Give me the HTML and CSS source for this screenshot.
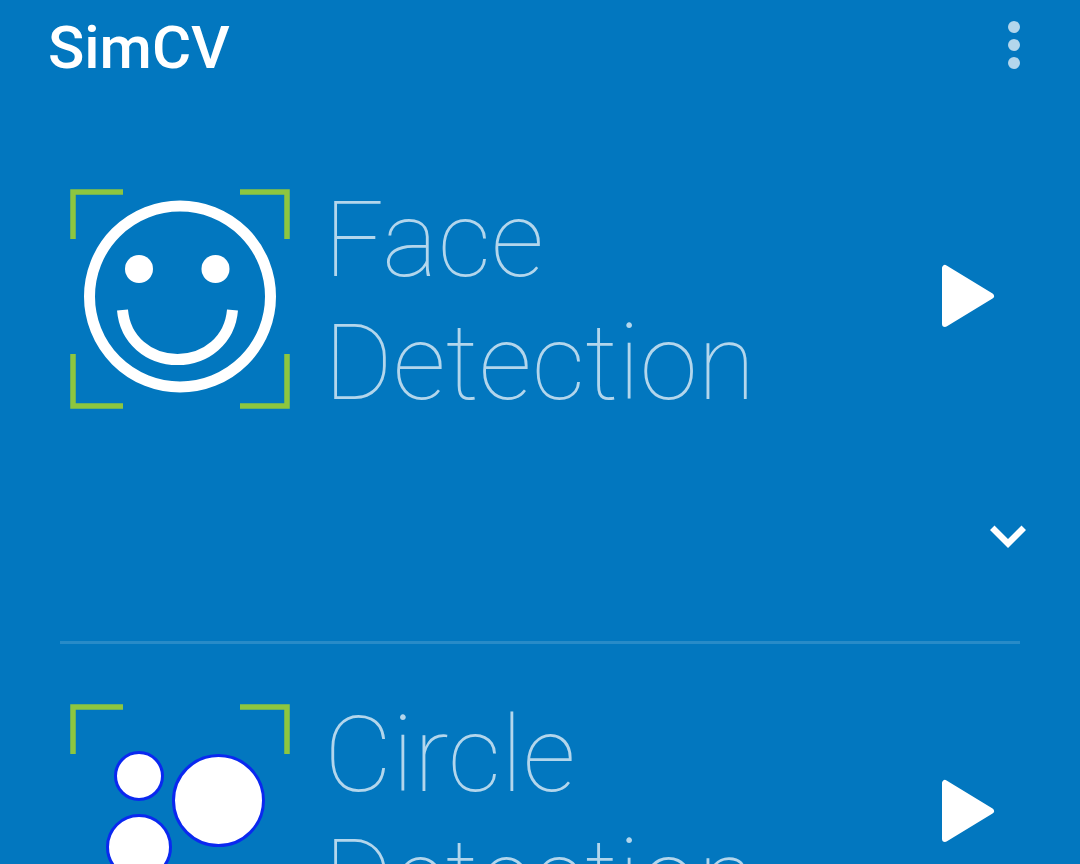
FILE: index.html
```html
<!DOCTYPE html>
<html lang="en">
<head>
<meta charset="utf-8">
<meta name="viewport" content="width=device-width, initial-scale=1">
<title>SimCV</title>
<link rel="stylesheet" href="styles.css">
</head>
<body>
<header class="app-bar">
  <h1 class="app-title">SimCV</h1>
  <button class="icon-button menu-button" type="button" aria-label="More options">
    <svg width="12" height="48" viewBox="0 0 12 48" fill="currentColor"><circle cx="6" cy="6" r="6"/><circle cx="6" cy="24" r="6"/><circle cx="6" cy="42" r="6"/></svg>
  </button>
</header>
<main class="list">
  <article class="item">
    <div class="item-row">
      <svg class="item-icon" viewBox="0 0 240 240" aria-hidden="true">
        <path class="frame" d="M13 60V13H63M180 13H227V60M13 175V227H63M180 227H227V175"/>
        <circle class="line" cx="120" cy="117.500" r="90.500"/>
        <circle class="solid" cx="79" cy="90" r="14"/>
        <circle class="solid" cx="155.500" cy="90" r="14"/>
        <path class="line" d="M62.500 131C65 161 89 180.500 117.500 180.500S170 161 172.500 131"/>
      </svg>
      <h2 class="item-title">Face Detection</h2>
      <button class="icon-button play-button" type="button" aria-label="Start face detection">
        <svg width="54" height="64" viewBox="0 0 54 64" fill="currentColor" stroke="currentColor" stroke-width="6" stroke-linejoin="round"><path d="M4 4V60L50 32Z"/></svg>
      </button>
    </div>
    <div class="item-actions">
      <button class="icon-button expand-button" type="button" aria-label="Show details">
        <svg width="36" height="24" viewBox="0 0 36 24" fill="currentColor"><path d="M4.500 .5L18 14L31.500 .5L36 5L18 23L0 5Z"/></svg>
      </button>
    </div>
  </article>
  <article class="item">
    <div class="item-row">
      <svg class="item-icon" viewBox="0 0 240 240" aria-hidden="true">
        <path class="frame" d="M13 60V13H63M180 13H227V60M13 175V227H63M180 227H227V175"/>
        <circle class="dot" cx="79" cy="82" r="23.500"/>
        <circle class="dot" cx="158.500" cy="106.500" r="45"/>
        <circle class="dot" cx="79" cy="153" r="31.500"/>
      </svg>
      <h2 class="item-title">Circle Detection</h2>
      <button class="icon-button play-button" type="button" aria-label="Start circle detection">
        <svg width="54" height="64" viewBox="0 0 54 64" fill="currentColor" stroke="currentColor" stroke-width="6" stroke-linejoin="round"><path d="M4 4V60L50 32Z"/></svg>
      </button>
    </div>
  </article>
</main>
</body>
</html>
```
FILE: styles.css
```css
* {
  box-sizing: border-box;
}

body {
  margin: 0;
  height: 100vh;
  display: flex;
  flex-direction: column;
  overflow: hidden;
  background: #0277bf;
  color: #fff;
  font-family: Roboto, "Noto Sans", sans-serif;
}

.app-bar {
  display: flex;
  flex: none;
  align-items: center;
  justify-content: space-between;
  padding: 13px 60px 37px 48px;
}

.app-title {
  margin: 0;
  font-size: 60px;
  font-weight: 500;
  line-height: 70px;
}

.icon-button {
  display: flex;
  padding: 0;
  border: 0;
  background: none;
  color: inherit;
  cursor: pointer;
}

.menu-button {
  padding-bottom: 6px;
  color: #b3d6ec;
}

.list {
  flex: 1;
  min-height: 0;
  padding: 0 60px;
  overflow-y: auto;
  scrollbar-width: none;
}

.item {
  padding-top: 59px;
}

.item + .item {
  border-top: 3px solid #288bc8;
  padding-top: 50px;
}

.item-row {
  display: flex;
  align-items: flex-start;
}

.item-icon {
  flex: none;
  width: 240px;
  height: 240px;
}

.frame {
  fill: none;
  stroke: #8dc63f;
  stroke-width: 5.500;
}

.line {
  fill: none;
  stroke: #fff;
  stroke-width: 11;
}

.solid {
  fill: #fff;
}

.dot {
  fill: #fff;
  stroke: #0a28f0;
  stroke-width: 3;
}

.item-title {
  flex: 1;
  margin: 0;
  padding: 0 16px 0 24px;
  color: #b3d6ec;
  font-size: 105px;
  font-weight: 100;
  line-height: 123px;
}

.play-button {
  height: 234px;
  align-items: center;
  padding: 0 25px;
}

.item-actions {
  display: flex;
  justify-content: flex-end;
  height: 216px;
  padding-top: 100px;
  margin-right: -6px;
}

.expand-button {
  height: 24px;
}
```
